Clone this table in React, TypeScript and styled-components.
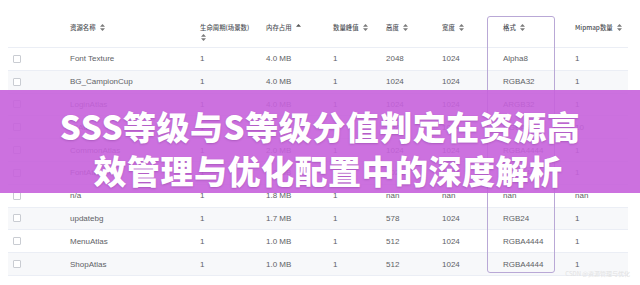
import styled, { createGlobalStyle } from 'styled-components';

const GlobalStyle = createGlobalStyle`
  html, body {
    margin: 0;
    padding: 0;
    background: #ffffff;
  }
  body {
    width: 640px;
    height: 285px;
    overflow: hidden;
    font-family: "Liberation Sans", Arial, "Noto Sans CJK SC", sans-serif;
  }
`;

type Row = string[];

const headers = ['资源名称', '生命周期(场景数)', '内存占用', '数量峰值', '高度', '宽度', '格式', 'Mipmap数量'];

const rows: Row[] = [
  ['Font Texture', '1', '4.0 MB', '1', '2048', '1024', 'Alpha8', '1'],
  ['BG_CampionCup', '1', '4.0 MB', '1', '1024', '1024', 'RGBA32', '1'],
  ['LoginAtlas', '1', '4.0 MB', '1', '1024', '1024', 'ARGB32', '1'],
  ['UIAtlas', '1', '4.0 MB', '1', '1024', '1024', 'RGBA32', '10'],
  ['CommonAtlas', '1', '2.0 MB', '1', '1024', '1024', 'RGBA4444', '1'],
  ['FontAtlas', '1', '2.0 MB', '1', '1024', '1024', 'RGBA4444', '1'],
  ['n/a', '1', '1.8 MB', '1', 'nan', 'nan', 'nan', 'nan'],
  ['updatebg', '1', '1.7 MB', '1', '578', '1024', 'RGB24', '1'],
  ['MenuAtlas', '1', '1.0 MB', '1', '512', '1024', 'RGBA4444', '1'],
  ['ShopAtlas', '1', '1.0 MB', '1', '512', '1024', 'RGBA4444', '1']
];

const SortIcon = ({ active }: { active?: boolean }) => (
  <SortSvg width="5" height="7" viewBox="0 0 5 7">
    <path d="M2.5 0 L5 2.8 L0 2.8 Z" fill={active ? '#555' : '#7a7a7a'} />
    {!active && <path d="M2.5 7 L5 4.2 L0 4.2 Z" fill="#7a7a7a" />}
  </SortSvg>
);

const App = () => {
  return (
    <Page>
      <GlobalStyle />
      <Table>
        <HeaderRow>
          <HeadCell />
          {headers.map((h, i) => (
            <HeadCell key={h}>
              <HeadLabel>{h}</HeadLabel>
              {i === 1 && <br />}
              <SortIcon active={i === 2} />
            </HeadCell>
          ))}
        </HeaderRow>
        {rows.map((r, idx) => (
          <BodyRow key={idx} $striped={idx % 2 === 1}>
            <Cell>
              <Checkbox />
            </Cell>
            {r.map((v, i) => (
              <Cell key={i}>{v}</Cell>
            ))}
          </BodyRow>
        ))}
      </Table>
      <Highlight />
      <Banner>
        <Title>
          <TitleLine>SSS等级与S等级分值判定在资源高</TitleLine>
          <TitleLine $shift={16}>效管理与优化配置中的深度解析</TitleLine>
        </Title>
      </Banner>
      <Watermark>CSDN @资源管理与优化</Watermark>
    </Page>
  );
};

const Page = styled.div`
  position: relative;
  width: 640px;
  height: 285px;
  padding: 15px 12px 0 8px;
  box-sizing: border-box;
`;

const Table = styled.div`
  display: flex;
  flex-direction: column;
  width: 620px;
`;

const columns = '56px 130px 66px 67px 53px 56px 61px 72px 59px';

const HeaderRow = styled.div`
  display: grid;
  grid-template-columns: ${columns};
  align-items: start;
  flex: none;
  height: 33px;
  border-bottom: 1px solid #ebeef5;
  box-sizing: border-box;
`;

const HeadCell = styled.div`
  padding: 8px 6px 0;
  font-family: "Noto Sans CJK SC", "Liberation Sans", sans-serif;
  font-size: 6.4px;
  line-height: 10px;
  font-weight: 500;
  color: #4f5258;
  white-space: nowrap;
`;

const HeadLabel = styled.span`
  margin-right: 3px;
`;

const SortSvg = styled.svg`
  display: inline-block;
  vertical-align: -1px;
  margin-left: 1px;
`;

const BodyRow = styled.div<{ $striped?: boolean }>`
  display: grid;
  grid-template-columns: ${columns};
  flex: none;
  height: 22.8px;
  align-items: center;
  background: ${({ $striped }) => ($striped ? '#f7f8fa' : '#ffffff')};
  border-bottom: 1px solid #ebeef5;
  box-sizing: border-box;
`;

const Cell = styled.div`
  padding: 0 6px;
  font-size: 8px;
  color: #606266;
  white-space: nowrap;
  display: flex;
  align-items: center;

  &:first-child {
    padding-left: 5px;
  }
`;

const Checkbox = styled.span`
  display: block;
  width: 6px;
  height: 6px;
  border: 1px solid #c9ccd2;
  border-radius: 1px;
  background: #fff;
`;

const Highlight = styled.div`
  position: absolute;
  left: 487px;
  top: 16px;
  width: 68px;
  height: 257px;
  border: 1px solid #b9a8d6;
  border-radius: 3px;
  box-sizing: border-box;
  pointer-events: none;
`;

const Banner = styled.div`
  position: absolute;
  left: 0;
  right: 0;
  top: 90px;
  height: 103px;
  background: rgba(199, 98, 220, 0.9);
  display: flex;
  align-items: center;
  justify-content: center;
  padding-top: 12px;
  box-sizing: border-box;
`;

const Title = styled.h1`
  margin: 0;
  display: flex;
  flex-direction: column;
  align-items: center;
  font-family: "Noto Sans CJK SC", "Noto Sans", sans-serif;
  font-weight: 900;
  font-size: 33px;
  line-height: 44px;
  color: #ffffff;
  letter-spacing: 0.5px;
  text-shadow: 0 1px 2px rgba(80, 20, 100, 0.25);
`;

const TitleLine = styled.span<{ $shift?: number }>`
  white-space: nowrap;
  margin-left: ${({ $shift }) => $shift ?? 0}px;
`;

const Watermark = styled.div`
  position: absolute;
  right: 10px;
  bottom: 7px;
  font-size: 6px;
  color: #e2e2e2;
  font-family: "Noto Sans CJK SC", "Liberation Sans", sans-serif;
`;

export default App;
